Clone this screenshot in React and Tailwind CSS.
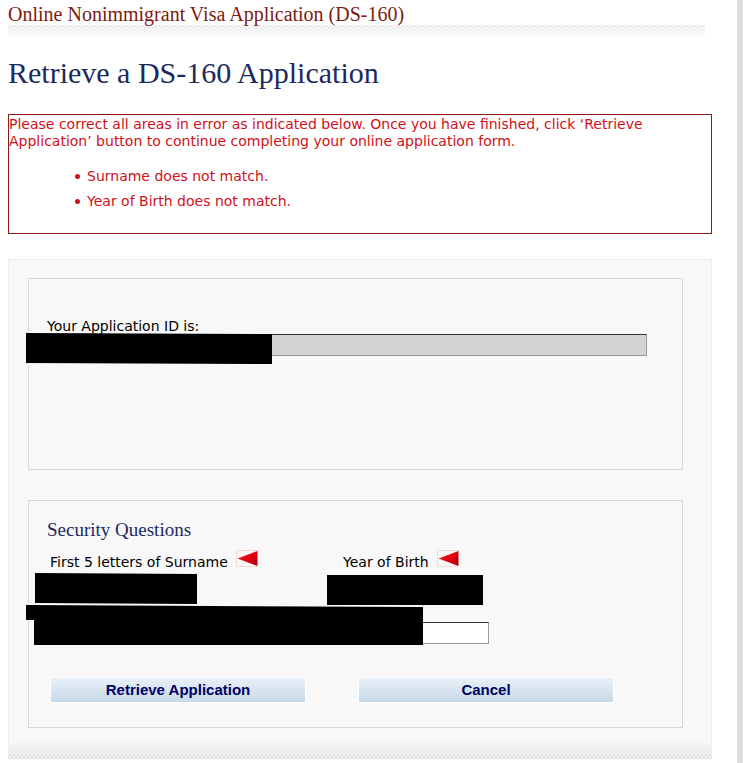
const errors = ["Surname does not match.", "Year of Birth does not match."];

// little red arrow shown next to a field in error
function ErrorArrow() {
  return (
    <svg width="22" height="17" viewBox="0 0 22 17" className="shrink-0" aria-hidden="true">
      <defs>
        <linearGradient id="arrow-red" x1="0" y1="0" x2="1" y2="1">
          <stop offset="0" stopColor="#f03030" />
          <stop offset="0.5" stopColor="#e3000f" />
          <stop offset="1" stopColor="#a80008" />
        </linearGradient>
      </defs>
      <path d="M21.5 0.5 H0.5 V16.5 H21.5" fill="#fbf8f6" stroke="#f0dcd4" />
      <path d="M1.5 8.5 L21.5 1 V16 Z" fill="url(#arrow-red)" />
    </svg>
  );
}

function TextField({ className = "", ...props }) {
  return (
    <input
      type="text"
      className={[
        "block h-[22px] border border-[#999] border-t-[#333] px-1 text-sm outline-none",
        className,
      ].join(" ")}
      {...props}
    />
  );
}

function FormButton({ children }) {
  return (
    <button
      type="button"
      className="h-[26px] w-[256px] border border-white bg-linear-to-b from-[#e9f0f7] to-[#c5d9e9] font-['Liberation_Sans',Arial,sans-serif] text-[15px] font-bold text-[#000066]"
    >
      {children}
    </button>
  );
}

// solid bar laid over a private value
function Redaction({ className }) {
  return <div className={["absolute bg-black", className].join(" ")} />;
}

export default function App() {
  return (
    <div className="min-h-screen border-r-6 border-[#dcdcdc] bg-white pl-2 pr-[25px] font-['DejaVu_Sans',Verdana,sans-serif] text-sm text-black">
      <header className="pt-1">
        <p className="font-['Liberation_Serif','Times_New_Roman',serif] text-xl leading-[21px] text-[#7c1a10]">
          Online Nonimmigrant Visa Application (DS-160)
        </p>
        <div className="mr-[7px] h-[14px] bg-[linear-gradient(to_bottom,transparent,white),repeating-conic-gradient(#e6e6e6_0_25%,#f6f6f6_0_50%)] bg-size-[auto,4px_4px]" />
        <h1 className="mt-4 font-['Liberation_Serif','Times_New_Roman',serif] text-[30px] leading-9 text-[#1b2a5e]">
          Retrieve a DS-160 Application
        </h1>
      </header>

      <section role="alert" className="mt-[23px] border border-[#8f1a1a] pb-[19px] leading-[17px] text-[#d01018]">
        <p className="pt-px">
          Please correct all areas in error as indicated below. Once you have finished, click
          ‘Retrieve Application’ button to continue completing your online application form.
        </p>
        <ul className="mt-[14px] pl-[66px] leading-[25px]">
          {errors.map((error) => (
            <li key={error} className="flex items-center gap-[7px]">
              <span className="size-[5px] rounded-full bg-[#d01018]" />
              {error}
            </li>
          ))}
        </ul>
      </section>

      <form className="mt-[25px] border border-b-0 border-dotted border-[#e2e2e2] bg-[#f8f8f8]">
        <div className="pl-[19px] pr-7 pt-[18px]">
          <div className="relative h-48 border border-[#d8d8d8] pl-[18px] pr-[35px] pt-[39px]">
            <label htmlFor="application-id" className="block leading-4">
              Your Application ID is:
            </label>
            <TextField id="application-id" readOnly className="w-full bg-[#d3d3d3]" />
            <Redaction className="-left-[3px] top-[54px] h-[31px] w-[246px] [clip-path:polygon(0_0,100%_1px,100%_100%,0_30px)]" />
          </div>

          <div className="relative mt-[30px] border border-[#d8d8d8] pb-6 pl-[18px] pt-[17px]">
            <h2 className="font-['Liberation_Serif','Times_New_Roman',serif] text-[19px] leading-6 text-[#1b2a5e]">
              Security Questions
            </h2>
            <div className="flex pl-[3px] pt-2">
              <div className="w-[293px]">
                <div className="flex gap-2">
                  <label htmlFor="surname" className="pt-1 leading-4">
                    First 5 letters of Surname
                  </label>
                  <ErrorArrow />
                </div>
                <TextField id="surname" className="mt-2 w-[140px] bg-white" />
              </div>
              <div>
                <div className="flex gap-2">
                  <label htmlFor="birth-year" className="pt-1 leading-4">
                    Year of Birth
                  </label>
                  <ErrorArrow />
                </div>
                <TextField id="birth-year" className="mt-2 w-[130px] bg-white" />
              </div>
            </div>
            <TextField aria-label="Security answer" className="ml-[3px] mt-[22px] w-[439px] bg-white" />
            <div className="mt-[33px] flex gap-[52px] pl-[3px]">
              <FormButton>Retrieve Application</FormButton>
              <FormButton>Cancel</FormButton>
            </div>

            <Redaction className="left-[6px] top-[72px] h-[31px] w-[162px] [clip-path:polygon(0_0,100%_1px,100%_100%,0_30px)]" />
            <Redaction className="left-[298px] top-[74px] h-[30px] w-[156px]" />
            <Redaction className="-left-[3px] top-[104px] h-[15px] w-[397px] [clip-path:polygon(0_0,100%_2px,100%_100%,0_100%)]" />
            <Redaction className="left-[5px] top-[106px] h-[38px] w-[389px]" />
          </div>
        </div>
        <div className="mt-3 h-[19px] bg-[linear-gradient(to_top,transparent,#f8f8f8),repeating-conic-gradient(#dcdcdc_0_25%,#f0f0f0_0_50%)] bg-size-[auto,4px_4px]" />
      </form>
    </div>
  );
}
